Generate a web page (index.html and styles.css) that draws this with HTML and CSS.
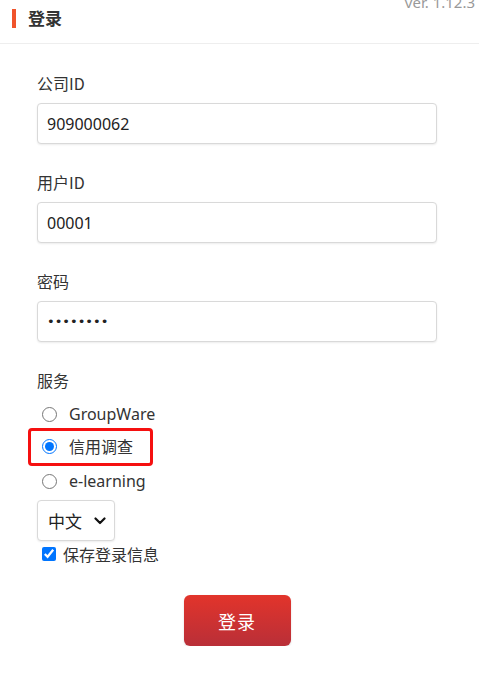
FILE: index.html
```html
<!DOCTYPE html>
<html lang="zh">
<head>
<meta charset="utf-8">
<title>登录</title>
<link rel="stylesheet" href="styles.css">
</head>
<body>
<header class="header">
  <h1 class="title"><span class="title-bar"></span>登录</h1>
  <span class="version">ver. 1.12.3</span>
</header>
<form class="form">
  <div class="field">
    <label class="label">公司ID</label>
    <input class="input" type="text" value="909000062">
  </div>
  <div class="field">
    <label class="label">用户ID</label>
    <input class="input" type="text" value="00001">
  </div>
  <div class="field">
    <label class="label">密码</label>
    <input class="input input-pw" type="password" value="12345678">
  </div>
  <div class="service">
    <div class="label">服务</div>
    <label class="radio-row"><input class="radio" type="radio" name="svc"><span>GroupWare</span></label>
    <label class="radio-row radio-hl"><input class="radio" type="radio" name="svc" checked><span>信用调查</span><span class="highlight"></span></label>
    <label class="radio-row radio-last"><input class="radio" type="radio" name="svc"><span>e-learning</span></label>
  </div>
  <div class="select-wrap">
    <select class="select"><option>中文</option></select>
    <svg class="chev" width="12" height="8" viewBox="0 0 12 8"><path d="M1.5 1.5 L6 6 L10.5 1.5" fill="none" stroke="#111" stroke-width="2.2" stroke-linecap="round" stroke-linejoin="round"/></svg>
  </div>
  <label class="check-row"><input class="check" type="checkbox" checked><span>保存登录信息</span></label>
  <div class="btn-row"><button class="btn" type="button">登录</button></div>
</form>
</body>
</html>
```
FILE: styles.css
```css
* { box-sizing: border-box; }
body {
  margin: 0;
  background: #fff;
  font-family: "Noto Sans", "Noto Sans CJK SC", sans-serif;
  color: #333;
  overflow: hidden;
}
.header {
  height: 44px;
  border-bottom: 1px solid #eeeeee;
  display: flex;
  justify-content: space-between;
  align-items: flex-start;
  padding: 0 4px 0 12px;
}
.title {
  margin: 8px 0 0 0;
  display: flex;
  align-items: center;
  font-family: "Noto Sans CJK SC", sans-serif;
  font-size: 17px;
  font-weight: 700;
  color: #333;
  height: 20px;
  line-height: 20px;
}
.title-bar {
  width: 4px;
  height: 19px;
  background: #f0542c;
  margin-right: 12px;
}
.version {
  font-family: "Noto Sans", sans-serif;
  font-size: 15px;
  color: #999;
  line-height: 15px;
  margin-top: -5px;
}
.form {
  padding: 27px 42px 0 37px;
}
.field {
  margin-bottom: 26px;
}
.label {
  display: block;
  font-family: "Noto Sans CJK SC", sans-serif;
  font-size: 16px;
  line-height: 24px;
  color: #333;
  margin-bottom: 8px;
}
.input {
  display: block;
  width: 400px;
  height: 41px;
  border: 1px solid #d9d9d9;
  border-radius: 4px;
  box-shadow: 0 1px 2px rgba(0,0,0,0.08);
  padding: 0 9px;
  font-family: "Noto Sans", sans-serif;
  font-size: 16px;
  color: #222;
  background: #fff;
}
.input-pw {
  font-family: "DejaVu Sans", sans-serif;
  font-size: 13px;
  letter-spacing: 0px;
}
.service {
  margin-top: 1px;
}
.service .label {
  margin-bottom: 6px;
}
.radio-row {
  position: relative;
  display: flex;
  align-items: center;
  height: 32px;
  font-family: "Noto Sans", "Noto Sans CJK SC", sans-serif;
  font-size: 16px;
  color: #333;
}
.radio-hl span:first-of-type {
  font-family: "Noto Sans CJK SC", sans-serif;
}
.radio-last {
  margin-top: 3px;
}
.radio {
  width: 15px;
  height: 15px;
  margin: 0 12px 0 5px;
}
.highlight {
  position: absolute;
  left: -9px;
  top: -2px;
  width: 125px;
  height: 38px;
  border: 3px solid #f51010;
  border-radius: 4px;
  pointer-events: none;
}
.select-wrap {
  position: relative;
  width: 78px;
  margin-top: 3px;
}
.select {
  appearance: none;
  -webkit-appearance: none;
  display: block;
  width: 78px;
  height: 41px;
  border: 1px solid #d9d9d9;
  border-radius: 4px;
  box-shadow: 0 1px 2px rgba(0,0,0,0.08);
  background: #fff;
  padding: 0 0 0 10px;
  font-family: "Noto Sans CJK SC", sans-serif;
  font-size: 17px;
  color: #222;
}
.chev {
  position: absolute;
  right: 9px;
  top: 17px;
  pointer-events: none;
}
.check-row {
  display: flex;
  align-items: center;
  height: 26px;
  font-family: "Noto Sans CJK SC", sans-serif;
  font-size: 16px;
  color: #333;
}
.check {
  width: 14px;
  height: 14px;
  margin: 0 7px 0 5px;
}
.btn-row {
  display: flex;
  justify-content: center;
  margin-top: 28px;
}
.btn {
  width: 107px;
  height: 51px;
  border: none;
  border-radius: 6px;
  background: linear-gradient(#e2342b, #b92f38);
  color: #fff;
  font-family: "Noto Sans CJK SC", sans-serif;
  font-size: 18px;
  letter-spacing: 1px;
  box-shadow: 0 1px 2px rgba(0,0,0,0.15);
}
```
